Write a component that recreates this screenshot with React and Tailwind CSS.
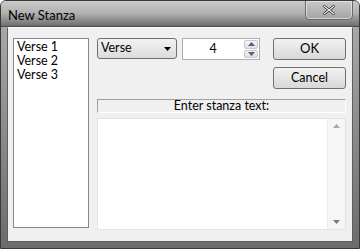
import React from "react";

const font = { fontFamily: 'Lato, "Segoe UI", "Liberation Sans", Arial, sans-serif' };

function ArrowDown({ className }) {
  return (
    <svg width="7" height="4" viewBox="0 0 7 4" className={className}>
      <path d="M0 0h7L3.5 4z" fill="currentColor" />
    </svg>
  );
}

function ArrowUp({ className }) {
  return (
    <svg width="7" height="4" viewBox="0 0 7 4" className={className}>
      <path d="M0 4h7L3.5 0z" fill="currentColor" />
    </svg>
  );
}

export default function App() {
  return (
    <div
      className="w-[360px] h-[249px] flex flex-col bg-gradient-to-b from-[#bdbdbd] to-[#8a8a8a] border border-[#3a3a3a] rounded-t-[6px] overflow-hidden text-[12px] text-black"
      style={font}
    >
      {/* ── Title bar ── */}
      <div className="h-[28px] flex items-start justify-between bg-gradient-to-b from-[#cacaca] via-[#b0b0b0] to-[#6e6e6e] border-b border-[#4a4a4a]">
        <span className="pl-[7px] pt-[5px] text-[13px] text-black">New Stanza</span>
        <div className="mr-[6px] w-[48px] h-[19px] rounded-b-[5px] border border-t-0 border-[#6a6a6a] bg-gradient-to-b from-[#c8c8c8] to-[#a4a4a4] flex items-center justify-center shadow-[inset_0_0_0_1px_rgba(255,255,255,0.5)]">
          <svg width="12" height="10" viewBox="0 0 12 10">
            <path
              d="M1 1l10 8M11 1L1 9"
              stroke="#2a2a2a"
              strokeWidth="2.6"
              strokeLinecap="square"
            />
            <path
              d="M1 1l10 8M11 1L1 9"
              stroke="#f4f4f4"
              strokeWidth="1.2"
              strokeLinecap="square"
            />
          </svg>
        </div>
      </div>

      {/* ── Client area ── */}
      <div className="flex-1 flex px-[6px] pb-[6px] bg-gradient-to-b from-[#a8a8a8] to-[#6c6c6c]">
        <div className="flex-1 flex bg-[#f0f0f0] border border-[#5e5e5e] border-t-white pl-[5px] pt-[10px] pb-[11px] pr-[6px]">
          {/* List */}
          <div className="w-[76px] h-[190px] bg-white border border-[#828790] pl-[3px] pt-[1px] leading-[14px] text-[12.5px] flex flex-col">
            <span>Verse 1</span>
            <span>Verse 2</span>
            <span>Verse 3</span>
          </div>

          <div className="flex-1 flex flex-col ml-[8px]">
            <div className="flex items-start">
              {/* Combo */}
              <div className="w-[80px] h-[21px] border border-[#707070] rounded-[3px] bg-gradient-to-b from-[#f2f2f2] to-[#dcdcdc] flex items-center justify-between pl-[3px] pr-[5px] text-[12.5px]">
                <span>Verse</span>
                <ArrowDown className="text-black" />
              </div>
              {/* Number */}
              <div className="ml-[5px] w-[78px] h-[22px] border border-[#abadb3] bg-white flex">
                <div className="flex-1 flex items-center justify-center text-[12.5px]">4</div>
                <div className="w-[16px] flex flex-col gap-[1px] p-[1px]">
                  <div className="flex-1 flex items-center justify-center bg-gradient-to-b from-[#f4f4f4] to-[#e0e0e0] border border-[#c8c8c8] rounded-[2px]">
                    <ArrowUp className="text-[#4d6185]" />
                  </div>
                  <div className="flex-1 flex items-center justify-center bg-gradient-to-b from-[#f4f4f4] to-[#e0e0e0] border border-[#c8c8c8] rounded-[2px]">
                    <ArrowDown className="text-[#4d6185]" />
                  </div>
                </div>
              </div>
              <div className="flex-1" />
              <button className="w-[73px] h-[22px] border border-[#707070] rounded-[3px] bg-gradient-to-b from-[#f2f2f2] to-[#d8d8d8] text-[13px]">
                OK
              </button>
            </div>

            <div className="flex justify-end mt-[7px]">
              <button className="w-[73px] h-[22px] border border-[#707070] rounded-[3px] bg-gradient-to-b from-[#f2f2f2] to-[#d8d8d8] text-[12.5px]">
                Cancel
              </button>
            </div>

            {/* Label bar */}
            <div className="mt-[10px] h-[14px] border border-[#a0a0a0] border-b-white border-r-white bg-[#f0f0f0] flex items-center justify-center leading-[12px] text-[12.5px]">
              Enter stanza text:
            </div>

            {/* Text area */}
            <div className="mt-[5px] h-[112px] border border-[#e3e3e3] bg-white flex justify-end">
              <div className="w-[18px] bg-[#f6f6f6] border-l border-[#ececec] flex flex-col items-center justify-between py-[5px]">
                <ArrowUp className="text-[#a8a8a8]" />
                <ArrowDown className="text-[#7a7a7a]" />
              </div>
            </div>
          </div>
        </div>
      </div>
    </div>
  );
}
